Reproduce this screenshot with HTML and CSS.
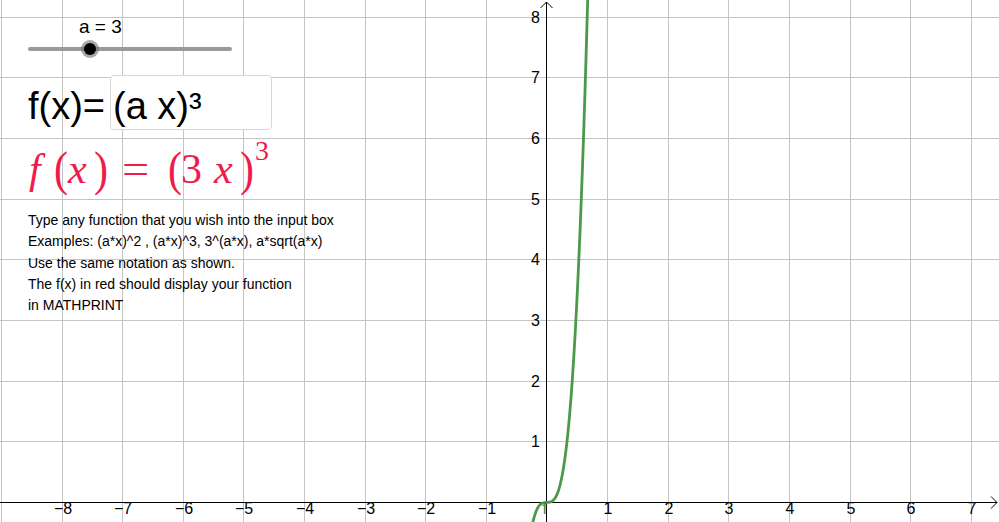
FILE: index.html
```html
<!DOCTYPE html>
<html>
<head>
<meta charset="utf-8">
<link rel="stylesheet" href="styles.css">
</head>
<body>
<div class="graph">
  <svg class="plot" width="999" height="522" viewBox="0 0 999 522">
    <g class="grid">
      <line x1="1.5" y1="0" x2="1.5" y2="522"/>
      <line x1="62.5" y1="0" x2="62.5" y2="522"/>
      <line x1="122.5" y1="0" x2="122.5" y2="522"/>
      <line x1="183.5" y1="0" x2="183.5" y2="522"/>
      <line x1="243.5" y1="0" x2="243.5" y2="522"/>
      <line x1="304.5" y1="0" x2="304.5" y2="522"/>
      <line x1="365.5" y1="0" x2="365.5" y2="522"/>
      <line x1="425.5" y1="0" x2="425.5" y2="522"/>
      <line x1="486.5" y1="0" x2="486.5" y2="522"/>
      <line x1="607.5" y1="0" x2="607.5" y2="522"/>
      <line x1="668.5" y1="0" x2="668.5" y2="522"/>
      <line x1="728.5" y1="0" x2="728.5" y2="522"/>
      <line x1="789.5" y1="0" x2="789.5" y2="522"/>
      <line x1="850.5" y1="0" x2="850.5" y2="522"/>
      <line x1="910.5" y1="0" x2="910.5" y2="522"/>
      <line x1="971.5" y1="0" x2="971.5" y2="522"/>
      <line x1="0" y1="17.5" x2="999" y2="17.5"/>
      <line x1="0" y1="77.5" x2="999" y2="77.5"/>
      <line x1="0" y1="138.5" x2="999" y2="138.5"/>
      <line x1="0" y1="199.5" x2="999" y2="199.5"/>
      <line x1="0" y1="259.5" x2="999" y2="259.5"/>
      <line x1="0" y1="320.5" x2="999" y2="320.5"/>
      <line x1="0" y1="381.5" x2="999" y2="381.5"/>
      <line x1="0" y1="441.5" x2="999" y2="441.5"/>
    </g>
    <g class="axes">
      <line x1="0" y1="502.5" x2="997" y2="502.5"/>
      <polyline points="991,496.5 997,502.5 991,508.5"/>
      <line x1="546.5" y1="2" x2="546.5" y2="522"/>
      <polyline points="540.5,8 546.5,2 552.5,8"/>
    </g>
    <g class="xlabels">
      <text x="63" y="514">−8</text>
      <text x="123" y="514">−7</text>
      <text x="184" y="514">−6</text>
      <text x="244" y="514">−5</text>
      <text x="305" y="514">−4</text>
      <text x="366" y="514">−3</text>
      <text x="426" y="514">−2</text>
      <text x="487" y="514">−1</text>
      <text x="608" y="514">1</text>
      <text x="669" y="514">2</text>
      <text x="729" y="514">3</text>
      <text x="790" y="514">4</text>
      <text x="851" y="514">5</text>
      <text x="911" y="514">6</text>
      <text x="972" y="514">7</text>
    </g>
    <g class="ylabels">
      <text x="540" y="23">8</text>
      <text x="540" y="83">7</text>
      <text x="540" y="144">6</text>
      <text x="540" y="205">5</text>
      <text x="540" y="265">4</text>
      <text x="540" y="326">3</text>
      <text x="540" y="387">2</text>
      <text x="540" y="447">1</text>
    </g>
    <path class="curve" d="M531.65,527.87 C550.84,430.72 570.03,702.73 589.22,-58.92"/>
    <text class="curve-label" x="542.5" y="513.5">f</text>
  </svg>

  <div class="panel">
    <div class="slider-label">a = 3</div>
    <div class="slider">
      <div class="knob"></div>
    </div>
    <div class="input-row">
      <div class="input-label">f(x)=</div>
      <div class="input-box">(a x)³</div>
    </div>
    <div class="formula"><span class="g g-f">f</span><span class="g p g-p1">(</span><span class="g g-x1">x</span><span class="g p g-p2">)</span><span class="g g-eq">=</span><span class="g p g-p3">(</span><span class="g g-3">3</span><span class="g g-x2">x</span><span class="g p g-p4">)</span><span class="g g-sup">3</span></div>
    <div class="note">
      <div>Type any function that you wish into the input box</div>
      <div>Examples: (a*x)^2 , (a*x)^3, 3^(a*x), a*sqrt(a*x)</div>
      <div>Use the same notation as shown.</div>
      <div>The f(x) in red should display your function</div>
      <div>in MATHPRINT</div>
    </div>
  </div>
</div>
</body>
</html>
```

FILE: styles.css
```css
html, body {
  margin: 0;
  padding: 0;
  background: #ffffff;
  overflow: hidden;
}

.graph {
  position: relative;
  width: 999px;
  height: 522px;
  font-family: "Liberation Sans", Arial, sans-serif;
}

.plot {
  display: block;
}

.grid line {
  stroke: #c4c4c4;
  stroke-width: 1;
}

.axes line,
.axes polyline {
  stroke: #000000;
  stroke-width: 1;
  fill: none;
}

.xlabels text,
.ylabels text {
  font-family: "Liberation Sans", Arial, sans-serif;
  font-size: 16px;
  fill: #000000;
}

.xlabels text {
  text-anchor: middle;
}

.ylabels text {
  text-anchor: end;
}

.curve {
  fill: none;
  stroke: #4b994b;
  stroke-width: 2.8;
}

.curve-label {
  font-family: "Liberation Sans", Arial, sans-serif;
  font-size: 16px;
  fill: #3e873e;
}

.panel {
  position: absolute;
  left: 0;
  top: 0;
  padding: 18px 0 0 28px;
  display: flex;
  flex-direction: column;
  align-items: flex-start;
}

.slider-label {
  margin-left: 51px;
  font-size: 19px;
  line-height: 18px;
  height: 18px;
  color: #000;
}

.slider {
  position: relative;
  margin-top: 11px;
  width: 204px;
  height: 4px;
  border-radius: 2px;
  background: #9a9a9a;
}

.knob {
  position: absolute;
  left: 56px;
  top: -4px;
  width: 12px;
  height: 12px;
  border-radius: 50%;
  background: #000;
  box-shadow: 0 0 0 3px rgba(110, 110, 110, 0.6);
}

.input-row {
  display: flex;
  align-items: baseline;
  margin-top: 24px;
}

.input-label {
  width: 82px;
  font-size: 38px;
  line-height: 40px;
  color: #000;
}

.input-box {
  box-sizing: border-box;
  width: 162px;
  height: 55px;
  padding: 10px 0 0 2px;
  border: 1px solid #d8d8d8;
  border-radius: 4px;
  background: #ffffff;
  font-size: 38px;
  line-height: 40px;
  color: #000;
}

.formula {
  margin-top: 15px;
  height: 48px;
  font-family: "Liberation Serif", "Times New Roman", serif;
  font-size: 42px;
  line-height: 48px;
  color: #ef1b4c;
  white-space: nowrap;
}

.g {
  display: inline-block;
  line-height: 48px;
}

.g-f, .g-x1, .g-x2 {
  font-style: italic;
}

.p {
  transform: scaleY(1.18);
  transform-origin: 50% 58%;
}

.g-f { width: 25px; margin-left: 1px; }
.g-p1 { width: 14px; }
.g-x1 { width: 26px; }
.g-p2 { width: 28px; }
.g-eq { width: 46px; transform: scaleX(1.15); transform-origin: 0 50%; }
.g-p3 { width: 13px; }
.g-3 { width: 33px; }
.g-x2 { width: 26px; }
.g-p4 { width: 15px; }
.g-sup {
  font-size: 28px;
  line-height: 0;
  vertical-align: 23px;
}

.note {
  margin-top: 17px;
  font-size: 14px;
  line-height: 21.25px;
  color: #000;
}
```
